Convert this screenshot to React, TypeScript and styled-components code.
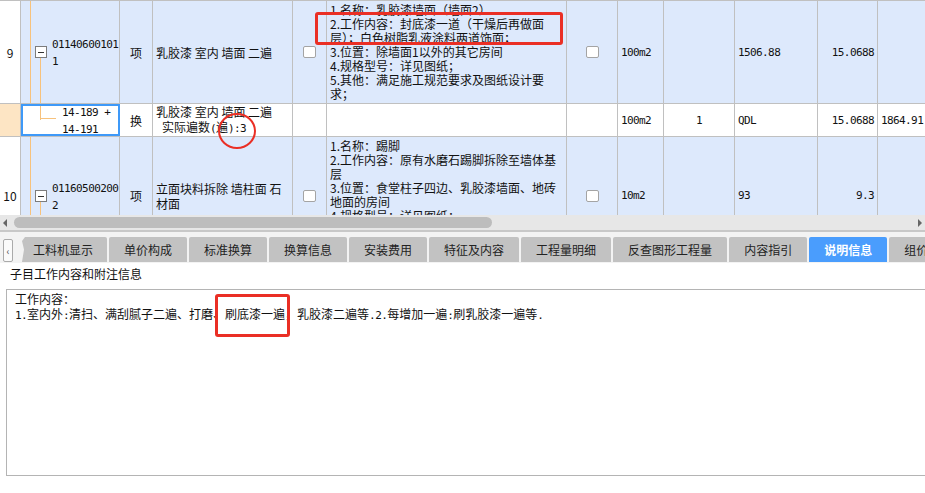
import React from "react";
import styled, { createGlobalStyle, css } from "styled-components";

const GRID = "#c0c0c0";
const ROW_BLUE = "#dde9fc";
const ORANGE = "#f7c27c";
const RED = "#ea2f25";
const COLS = "21px 99px 33px 140px 34px 240px 51px 46px 71px 83px 60px 62px";

const GlobalStyle = createGlobalStyle`
  html, body {
    margin: 0;
    padding: 0;
    background: #fff;
    overflow: hidden;
  }
  body {
    font-family: "Noto Sans CJK SC", "Noto Sans", sans-serif;
    font-size: 12px;
    color: #111;
  }
`;

const Page = styled.div`
  position: relative;
  width: 925px;
  height: 493px;
  overflow: hidden;
`;

const GridViewport = styled.div`
  height: 215px;
  overflow: hidden;
  border-top: 1px solid ${GRID};
  box-sizing: border-box;
`;

const Row = styled.div<{ $h: number; $bg?: string }>`
  display: grid;
  grid-template-columns: ${COLS};
  height: ${(p) => p.$h}px;
  background: ${(p) => p.$bg || "#fff"};
  border-bottom: 1px solid ${GRID};
  box-sizing: border-box;
`;

const Cell = styled.div<{
  $align?: "left" | "center" | "right";
  $bg?: string;
  $pl?: number;
  $pr?: number;
  $top?: boolean;
}>`
  display: flex;
  align-items: ${(p) => (p.$top ? "flex-start" : "center")};
  justify-content: ${(p) =>
    p.$align === "center" ? "center" : p.$align === "right" ? "flex-end" : "flex-start"};
  padding-left: ${(p) => p.$pl ?? 3}px;
  padding-right: ${(p) => p.$pr ?? 3}px;
  padding-top: ${(p) => (p.$top ? 2 : 0)}px;
  border-right: 1px solid ${GRID};
  box-sizing: border-box;
  overflow: hidden;
  white-space: nowrap;
  ${(p) =>
    p.$bg &&
    css`
      background: ${p.$bg};
    `}
`;

type Branch = "down" | "elbow" | undefined;

const treeLayers = (trunk: boolean, branch: Branch, bg: string) => {
  const line = `linear-gradient(${ORANGE}, ${ORANGE})`;
  const layers: string[] = [];
  if (trunk) layers.push(`${line} 9px 0 / 1px 100% no-repeat`);
  if (branch === "down") layers.push(`${line} 19px 100% / 1px 50% no-repeat`);
  if (branch === "elbow") {
    layers.push(`${line} 19px 0 / 1px 50% no-repeat`);
    layers.push(`${line} 19px 45% / 16px 1px no-repeat`);
  }
  layers.push(bg);
  return layers.join(", ");
};

const TreeCell = styled(Cell)<{ $trunk?: boolean; $branch?: Branch; $fill: string; $selected?: boolean }>`
  background: ${(p) => treeLayers(!!p.$trunk, p.$branch, p.$fill)};
  ${(p) =>
    p.$selected &&
    css`
      outline: 2px solid #3e99f8;
      outline-offset: -2px;
    `}
`;

const Toggle = styled.span`
  position: relative;
  width: 12px;
  height: 12px;
  margin-right: 5px;
  border: 1px solid #7c7c7c;
  background: #fff;
  box-sizing: border-box;
  flex-shrink: 0;
  &::before {
    content: "";
    position: absolute;
    left: 2px;
    right: 2px;
    top: 5px;
    height: 1px;
    background: #333;
  }
`;

const Mono = styled.span`
  font-family: "DejaVu Sans Mono", "Liberation Mono", monospace;
  font-size: 11px;
  letter-spacing: -0.6px;
`;

const Lines = styled.div<{ $lh: number }>`
  line-height: ${(p) => p.$lh}px;
`;

const Line = styled.div<{ $indent?: number }>`
  padding-left: ${(p) => p.$indent ?? 0}px;
`;

const Check = styled.span`
  width: 13px;
  height: 12px;
  border: 1px solid #a4a4a4;
  border-radius: 2px;
  background: #fff;
  box-sizing: border-box;
`;

const Scrollbar = styled.div`
  display: flex;
  align-items: center;
  height: 15px;
  background: #e7e7e7;
  padding: 0 3px;
`;

const Arrow = styled.span<{ $dir: "left" | "right" }>`
  width: 0;
  height: 0;
  border-top: 4px solid transparent;
  border-bottom: 4px solid transparent;
  ${(p) =>
    p.$dir === "left"
      ? css`
          border-right: 4px solid #666;
        `
      : css`
          border-left: 4px solid #666;
        `}
`;

const Track = styled.div`
  flex: 1;
  display: flex;
  padding: 0 4px 0 7px;
`;

const Thumb = styled.div`
  width: 478px;
  height: 11px;
  border-radius: 6px;
  background: #bdbdbd;
`;

const TabStrip = styled.div`
  display: flex;
  align-items: flex-end;
  gap: 2px;
  height: 33px;
  padding-left: 3px;
  box-sizing: border-box;
  border-top: 2px solid #c8c8c8;
  background: #f3f3f3;
  overflow: hidden;
  padding-bottom: 1px;
`;

const ScrollBtn = styled.span`
  flex-shrink: 0;
  width: 10px;
  height: 23px;
  margin-right: 7px;
  display: flex;
  align-items: center;
  justify-content: center;
  border: 1px solid #aaa;
  border-radius: 2px;
  background: #fafafa;
  box-sizing: border-box;
  font-size: 10px;
  color: #555;
`;

const Tab = styled.div<{ $active?: boolean; $first?: boolean }>`
  flex-shrink: 0;
  height: 25px;
  line-height: 26px;
  padding: 0 15px;
  border-radius: 2px 2px 0 0;
  background: ${(p) => (p.$active ? "#4a9dfd" : "#c2c2c2")};
  color: ${(p) => (p.$active ? "#fff" : "#222")};
  font-weight: ${(p) => (p.$active ? 700 : 400)};
  ${(p) =>
    p.$first &&
    css`
      padding-left: 11px;
      padding-right: 14px;
      clip-path: polygon(3px 0, 100% 0, 100% 100%, 0 100%, 2px 50%, 0 4px);
    `}
`;

const InfoSection = styled.section`
  padding-top: 4px;
`;

const InfoTitle = styled.div`
  margin-left: 10px;
  line-height: 14px;
`;

const InfoBox = styled.div`
  margin: 8px -10px 0 6px;
  height: 187px;
  padding: 1px 8px;
  border: 1px solid #b4b4b4;
  box-sizing: border-box;
  line-height: 15px;
`;

const Markup = styled.div<{ $x: number; $y: number; $w: number; $h: number; $round?: boolean }>`
  position: absolute;
  left: ${(p) => p.$x}px;
  top: ${(p) => p.$y}px;
  width: ${(p) => p.$w}px;
  height: ${(p) => p.$h}px;
  box-sizing: border-box;
  border: ${(p) => (p.$round ? "2px" : "3px")} solid ${RED};
  border-radius: ${(p) => (p.$round ? "50%" : "3px")};
  pointer-events: none;
  z-index: 5;
`;

const row9Features = [
  "1.名称：乳胶漆墙面（墙面2）",
  "2.工作内容：封底漆一道（干燥后再做面",
  "层）；白色树脂乳液涂料两道饰面；",
  "3.位置：除墙面1以外的其它房间",
  "4.规格型号：详见图纸；",
  "5.其他：满足施工规范要求及图纸设计要",
  "求；",
];

const row10Features = [
  "1.名称：踢脚",
  "2.工作内容：原有水磨石踢脚拆除至墙体基",
  "层",
  "3.位置：食堂柱子四边、乳胶漆墙面、地砖",
  "地面的房间",
  "4.规格型号：详见图纸；",
  "5.其他：满足施工规范要求及图纸设计要",
  "求；",
];

const tabs = [
  "工料机显示",
  "单价构成",
  "标准换算",
  "换算信息",
  "安装费用",
  "特征及内容",
  "工程量明细",
  "反查图形工程量",
  "内容指引",
  "说明信息",
  "组价方案",
];

const MultiLine: React.FC<{ lines: string[]; lh: number }> = ({ lines, lh }) => (
  <Lines $lh={lh}>
    {lines.map((l, i) => (
      <Line key={i}>{l}</Line>
    ))}
  </Lines>
);

const App: React.FC = () => {
  return (
    <Page>
      <GlobalStyle />
      <GridViewport>
        <Row $h={103} $bg={ROW_BLUE}>
          <Cell $align="center" $bg="#fff">9</Cell>
          <TreeCell $pl={14} $trunk $branch="down" $fill={ROW_BLUE}>
            <Toggle />
            <Lines $lh={15}>
              <Mono>01140600101</Mono>
              <br />
              <Mono>1</Mono>
            </Lines>
          </TreeCell>
          <Cell $align="center">项</Cell>
          <Cell>乳胶漆 室内 墙面 二遍</Cell>
          <Cell $align="center">
            <Check />
          </Cell>
          <Cell $top>
            <MultiLine lines={row9Features} lh={14} />
          </Cell>
          <Cell $align="center">
            <Check />
          </Cell>
          <Cell>
            <Mono>100m2</Mono>
          </Cell>
          <Cell />
          <Cell>
            <Mono>1506.88</Mono>
          </Cell>
          <Cell $align="right">
            <Mono>15.0688</Mono>
          </Cell>
          <Cell />
        </Row>

        <Row $h={33}>
          <Cell $bg="#fde5c4" />
          <TreeCell $pl={41} $branch="elbow" $fill="#fff" $selected>
            <Lines $lh={15}>
              <Mono>14-189 +</Mono>
              <br />
              <Mono>14-191</Mono>
            </Lines>
          </TreeCell>
          <Cell $align="center">换</Cell>
          <Cell>
            <Lines $lh={15}>
              <Line>乳胶漆 室内 墙面 二遍</Line>
              <Line $indent={6}>
                实际遍数<Mono>(</Mono>遍<Mono>):3</Mono>
              </Line>
            </Lines>
          </Cell>
          <Cell />
          <Cell />
          <Cell />
          <Cell>
            <Mono>100m2</Mono>
          </Cell>
          <Cell $align="center">
            <Mono>1</Mono>
          </Cell>
          <Cell>
            <Mono>QDL</Mono>
          </Cell>
          <Cell $align="right">
            <Mono>15.0688</Mono>
          </Cell>
          <Cell>
            <Mono>1864.91</Mono>
          </Cell>
        </Row>

        <Row $h={118} $bg={ROW_BLUE}>
          <Cell $align="center" $bg="#fff">10</Cell>
          <TreeCell $pl={14} $trunk $branch="down" $fill={ROW_BLUE}>
            <Toggle />
            <Lines $lh={15}>
              <Mono>01160500200</Mono>
              <br />
              <Mono>2</Mono>
            </Lines>
          </TreeCell>
          <Cell $align="center">项</Cell>
          <Cell>
            <Lines $lh={15}>
              <Line>立面块料拆除 墙柱面 石</Line>
              <Line>材面</Line>
            </Lines>
          </Cell>
          <Cell $align="center">
            <Check />
          </Cell>
          <Cell $top>
            <MultiLine lines={row10Features} lh={14} />
          </Cell>
          <Cell $align="center">
            <Check />
          </Cell>
          <Cell>
            <Mono>10m2</Mono>
          </Cell>
          <Cell />
          <Cell>
            <Mono>93</Mono>
          </Cell>
          <Cell $align="right">
            <Mono>9.3</Mono>
          </Cell>
          <Cell />
        </Row>
      </GridViewport>

      <Scrollbar>
        <Arrow $dir="left" />
        <Track>
          <Thumb />
        </Track>
        <Arrow $dir="right" />
      </Scrollbar>

      <TabStrip>
        <ScrollBtn>‹</ScrollBtn>
        {tabs.map((t, i) => (
          <Tab key={t} $first={i === 0} $active={t === "说明信息"}>
            {t}
          </Tab>
        ))}
      </TabStrip>

      <InfoSection>
        <InfoTitle>子目工作内容和附注信息</InfoTitle>
        <InfoBox>
          <div>工作内容：</div>
          <div>
            <Mono>1.</Mono>室内外<Mono>:</Mono>清扫、满刮腻子二遍、打磨、刷底漆一遍，乳胶漆二遍等
            <Mono>.2.</Mono>每增加一遍<Mono>:</Mono>刷乳胶漆一遍等<Mono>.</Mono>
          </div>
        </InfoBox>
      </InfoSection>

      <Markup $x={315} $y={12} $w={248} $h={33} />
      <Markup $x={218} $y={113} $w={38} $h={36} $round />
      <Markup $x={215} $y={294} $w={75} $h={43} />
    </Page>
  );
};

export default App;
